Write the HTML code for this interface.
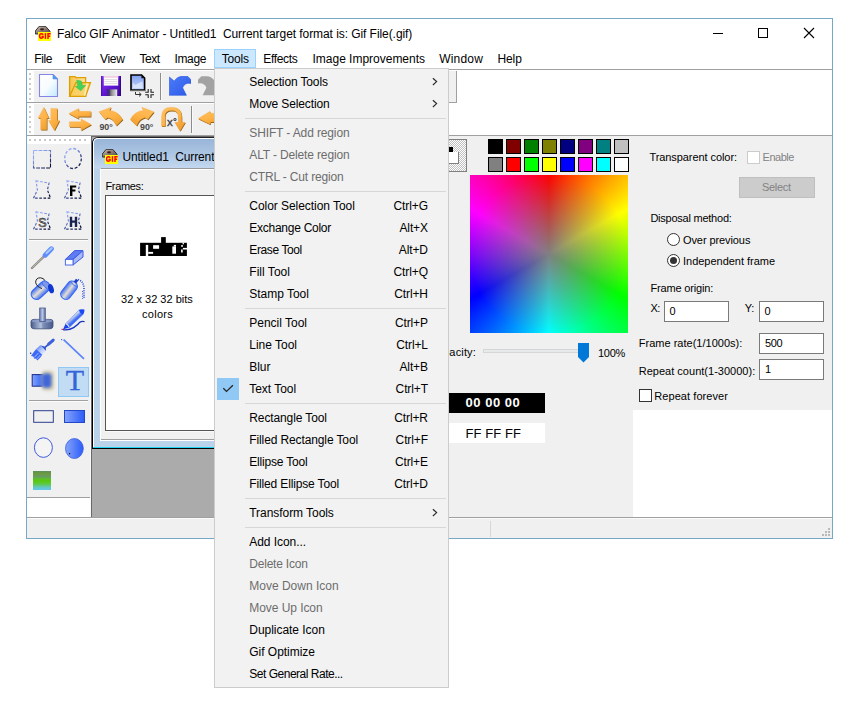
<!DOCTYPE html>
<html><head><meta charset="utf-8"><title>Falco GIF Animator</title>
<style>
*{box-sizing:border-box;margin:0;padding:0}
html,body{width:864px;height:713px;background:#fff;overflow:hidden}
body{position:relative;font-family:"Liberation Sans",sans-serif;font-size:12px;color:#000}
.abs,.t,.b{position:absolute}
.t{white-space:pre;display:block}
.msep{position:absolute;left:245px;width:201px;height:1px;background:#d7d7d7}
.inp{position:absolute;background:#fff;border:1px solid #7a7a7a;height:21px;width:65px}
.sw{position:absolute;width:15px;height:15px;border:1px solid #000}
</style></head><body>
<!-- main window frame -->
<div class="b" style="left:26px;top:18px;width:807px;height:521px;border:1px solid #78a8c8;background:#fff"></div>
<!-- title bar controls -->
<svg class="abs" style="left:706px;top:22px" width="120" height="24" viewBox="0 0 120 24">
 <path d="M7 11.5 H17" stroke="#000" stroke-width="1"/>
 <rect x="52.5" y="6.5" width="9" height="9" fill="none" stroke="#000" stroke-width="1"/>
 <path d="M98 6 L108 16 M108 6 L98 16" stroke="#000" stroke-width="1.1"/>
</svg>
<!-- menubar highlight -->
<div class="b" style="left:214px;top:49px;width:42px;height:19px;background:#cce8ff;border:1px solid #99d1ff"></div>
<!-- toolbar area -->
<div class="b" style="left:27px;top:69px;width:805px;height:1px;background:#a0a0a0"></div>
<div class="b" style="left:27px;top:70px;width:805px;height:66px;background:#fff"></div>
<div class="b" style="left:27px;top:71px;width:429px;height:31px;background:#f0f0f0"></div>
<div class="b" style="left:27px;top:71px;width:7px;height:31px;background:#fff"></div>
<div class="b" style="left:27px;top:102px;width:430px;height:1px;background:#a0a0a0"></div>
<div class="b" style="left:456px;top:71px;width:1px;height:32px;background:#a0a0a0"></div>
<div class="b" style="left:27px;top:104px;width:421px;height:31px;background:#f0f0f0"></div>
<div class="b" style="left:27px;top:104px;width:7px;height:31px;background:#fff"></div>
<div class="b" style="left:27px;top:135px;width:805px;height:1px;background:#a0a0a0"></div>
<!-- client background -->
<div class="b" style="left:27px;top:136px;width:805px;height:382px;background:#f0f0f0"></div>
<!-- status bar -->
<div class="b" style="left:27px;top:517px;width:805px;height:1px;background:#a0a0a0"></div>
<div class="b" style="left:27px;top:518px;width:805px;height:20px;background:#f0f0f0"></div>
<div class="b" style="left:27px;top:518px;width:805px;height:1px;background:#fbfbfb"></div>
<div class="b" style="left:490px;top:521px;width:1px;height:16px;background:#d7d7d7"></div>
<!-- right white area -->
<div class="b" style="left:633px;top:410px;width:199px;height:107px;background:#fff"></div>
<!-- tool palette -->
<div class="b" style="left:27px;top:497px;width:64px;height:20px;background:#fff;border-top:1px solid #a0a0a0"></div>
<div class="b" style="left:90px;top:136px;width:1px;height:381px;background:#fff"></div>
<div class="b" style="left:29px;top:239px;width:59px;height:1px;background:#a0a0a0"></div><div class="b" style="left:29px;top:240px;width:59px;height:1px;background:#fcfcfc"></div>
<div class="b" style="left:29px;top:400px;width:59px;height:1px;background:#a0a0a0"></div><div class="b" style="left:29px;top:401px;width:59px;height:1px;background:#fcfcfc"></div>
<!-- MDI area -->
<div class="b" style="left:27px;top:136px;width:63px;height:8px;background:#fff"></div>
<div class="b" style="left:90px;top:136px;width:1px;height:381px;background:#f8f8f8"></div>
<div class="b" style="left:91px;top:136px;width:356px;height:381px;background:#ababab;border-left:1px solid #696969;border-top:1px solid #696969"></div>
<!-- child window -->
<div class="b" style="left:92px;top:137px;width:355px;height:312px;background:linear-gradient(#97b3d7 0,#a9c3e2 14px,#c3d8ef 30px,#bbd2eb 31px);border-left:1px solid #000;border-top:1px solid #222;border-bottom:1px solid #000;border-top-left-radius:6px"></div>
<div class="b" style="left:93px;top:138px;width:354px;height:309px;border-left:1px solid #fff;border-top:1px solid #fff;border-top-left-radius:5px"></div>
<div class="b" style="left:93px;top:447px;width:354px;height:1px;background:#22d3f2"></div>
<div class="b" style="left:100px;top:168px;width:347px;height:273px;background:#f0f0f0;border-top:1px solid #9a9a9a;border-bottom:1px solid #fff;border-left:1px solid #fff"></div>
<div class="b" style="left:101px;top:169px;width:346px;height:1px;background:#fff"></div>
<div class="b" style="left:101px;top:439px;width:346px;height:1px;background:#a0a0a0"></div>
<div class="b" style="left:105px;top:195px;width:340px;height:236px;background:#fff;border:1px solid #555"></div>
<div class="b" style="left:105px;top:431px;width:340px;height:1px;background:#fafafa"></div>
<!-- pixel "text" sample in frame -->
<svg class="abs" style="left:140px;top:237px" width="48" height="20" viewBox="0 0 48 20">
 <g fill="#000"><rect x="21.1" y="0.1" width="4.7" height="6"/><rect x="0.1" y="5.8" width="46.8" height="13.2"/></g>
 <g fill="#fff"><rect x="5.8" y="7.9" width="2.4" height="11.2"/><rect x="13.1" y="8.2" width="6" height="3.6"/><rect x="8.2" y="14.9" width="4.9" height="1.9"/>
 <rect x="32.3" y="9.4" width="3.7" height="7.3"/><rect x="33.8" y="7.9" width="2.2" height="1.6"/>
 <rect x="42.6" y="5.7" width="1.3" height="1.6"/><rect x="41.1" y="8.2" width="1.9" height="1.5"/><rect x="42.9" y="10.9" width="4.1" height="1.6"/><rect x="41.1" y="12.5" width="1.6" height="3"/></g>
</svg>
<!-- fg/bg color indicator -->
<svg class="abs" style="left:440px;top:139px" width="27" height="33" viewBox="0 0 27 33" shape-rendering="crispEdges">
 <defs><pattern id="chk" width="2" height="2" patternUnits="userSpaceOnUse"><rect width="2" height="2" fill="#fff"/><rect width="1" height="1" fill="#c0c0c0"/><rect x="1" y="1" width="1" height="1" fill="#c0c0c0"/></pattern></defs>
 <rect width="27" height="33" fill="url(#chk)"/>
 <path d="M0 0.5 H26.5 V32.5 H0" fill="none" stroke="#808080" stroke-width="1"/>
 <rect x="6" y="8" width="7" height="5" fill="#000"/>
 <rect x="6" y="13" width="13" height="12" fill="#fff"/>
 <path d="M18.5 13 V24.5 H6" fill="none" stroke="#808080" stroke-width="1"/>
</svg>
<!-- swatches -->
<div class="sw" style="left:488px;top:139px;background:#000"></div><div class="sw" style="left:506px;top:139px;background:#800000"></div><div class="sw" style="left:524px;top:139px;background:#008000"></div><div class="sw" style="left:542px;top:139px;background:#808000"></div><div class="sw" style="left:560px;top:139px;background:#000080"></div><div class="sw" style="left:578px;top:139px;background:#800080"></div><div class="sw" style="left:596px;top:139px;background:#008080"></div><div class="sw" style="left:614px;top:139px;background:#c0c0c0"></div>
<div class="sw" style="left:488px;top:157px;background:#808080"></div><div class="sw" style="left:506px;top:157px;background:#f00"></div><div class="sw" style="left:524px;top:157px;background:#0f0"></div><div class="sw" style="left:542px;top:157px;background:#ff0"></div><div class="sw" style="left:560px;top:157px;background:#00f"></div><div class="sw" style="left:578px;top:157px;background:#f0f"></div><div class="sw" style="left:596px;top:157px;background:#0ff"></div><div class="sw" style="left:614px;top:157px;background:#fff"></div>
<!-- hue square -->
<div class="b" style="left:470px;top:175px;width:158px;height:158px;background:radial-gradient(circle at 50% 50%,rgba(128,128,128,1) 0,rgba(128,128,128,0) 80px),conic-gradient(from 0deg at 50% 50%,#f00,#ff0,#0f0,#0ff,#00f,#f0f,#f00)"></div>
<!-- opacity slider -->
<div class="b" style="left:483px;top:349px;width:100px;height:4px;background:#e7eaea;border:1px solid #d6d6d6"></div>
<svg class="abs" style="left:578px;top:343px" width="11" height="20" viewBox="0 0 11 20"><path d="M0 0 H11 V14 L5.5 19.5 L0 14 Z" fill="#0078d7"/></svg>
<!-- color value boxes -->
<div class="b" style="left:440px;top:393px;width:105px;height:20px;background:#000"></div>
<div class="b" style="left:440px;top:423px;width:105px;height:20px;background:#fff"></div>
<!-- right panel controls -->
<div class="b" style="left:747px;top:151px;width:13px;height:13px;background:#fff;border:1px solid #ccc"></div>
<div class="b" style="left:739px;top:177px;width:76px;height:21px;background:#ccc;border:1px solid #bfbfbf"></div>
<div class="b" style="left:667px;top:233px;width:13px;height:13px;background:#fff;border:1px solid #333;border-radius:50%"></div>
<div class="b" style="left:667px;top:254px;width:13px;height:13px;background:#fff;border:1px solid #333;border-radius:50%"></div>
<div class="b" style="left:670px;top:257px;width:7px;height:7px;background:#333;border-radius:50%"></div>
<div class="inp" style="left:664px;top:301px"></div>
<div class="inp" style="left:759px;top:301px"></div>
<div class="inp" style="left:759px;top:333px"></div>
<div class="inp" style="left:759px;top:359px"></div>
<div class="b" style="left:639px;top:389px;width:13px;height:13px;background:#fff;border:1px solid #333"></div>
<!-- size grip -->
<svg class="abs" style="left:820px;top:526px" width="12" height="12" viewBox="0 0 12 12" shape-rendering="crispEdges"><g fill="#b9b9b9"><rect x="8" y="2" width="2" height="2"/><rect x="5" y="5" width="2" height="2"/><rect x="8" y="5" width="2" height="2"/><rect x="2" y="8" width="2" height="2"/><rect x="5" y="8" width="2" height="2"/><rect x="8" y="8" width="2" height="2"/></g></svg>

<svg width="0" height="0" style="position:absolute">
 <defs>
  <linearGradient id="gOr" x1="0" y1="0" x2="0.5" y2="1"><stop offset="0" stop-color="#ffc062"/><stop offset="0.6" stop-color="#ffb347"/><stop offset="1" stop-color="#f3a233"/></linearGradient>
  <linearGradient id="gUndo" x1="0" y1="0" x2="1" y2="1"><stop offset="0" stop-color="#4c7cfa"/><stop offset="1" stop-color="#2c58e6"/></linearGradient><linearGradient id="gBl" x1="0" y1="0" x2="1" y2="1"><stop offset="0" stop-color="#7aa0ff"/><stop offset="1" stop-color="#2a5cf0"/></linearGradient>
  <linearGradient id="gBl2" x1="0" y1="0" x2="1" y2="0"><stop offset="0" stop-color="#3366ee"/><stop offset="1" stop-color="#88aaff"/></linearGradient>
  <linearGradient id="gDash" x1="0" y1="0" x2="0.75" y2="1"><stop offset="0" stop-color="#9db4ff"/><stop offset="0.4" stop-color="#7f93e6"/><stop offset="0.7" stop-color="#3a4688"/><stop offset="1" stop-color="#0a1038"/></linearGradient>
  <linearGradient id="gFalc" x1="0" y1="0" x2="1" y2="1"><stop offset="0" stop-color="#d8d0b8"/><stop offset="0.5" stop-color="#8a7a70"/><stop offset="1" stop-color="#50484c"/></linearGradient>
  <linearGradient id="gDoc" x1="0" y1="0" x2="1" y2="1"><stop offset="0" stop-color="#fff"/><stop offset="0.5" stop-color="#f8fcff"/><stop offset="1" stop-color="#bfeaff"/></linearGradient>
  <linearGradient id="gFold" x1="0" y1="0" x2="1" y2="0"><stop offset="0" stop-color="#f6c348"/><stop offset="1" stop-color="#ffe6a0"/></linearGradient><linearGradient id="gFold2" x1="0" y1="0" x2="1" y2="0.3"><stop offset="0" stop-color="#f9cc58"/><stop offset="1" stop-color="#fbd572"/></linearGradient>
  <linearGradient id="gFlop" x1="0" y1="0" x2="1" y2="1"><stop offset="0" stop-color="#8a3cf0"/><stop offset="0.5" stop-color="#6418d8"/><stop offset="1" stop-color="#3a0a98"/></linearGradient>
  <linearGradient id="gShut" x1="0" y1="0" x2="1" y2="0"><stop offset="0" stop-color="#222"/><stop offset="0.5" stop-color="#999"/><stop offset="1" stop-color="#eee"/></linearGradient>
  <linearGradient id="gFrm" x1="0" y1="0" x2="0" y2="1"><stop offset="0" stop-color="#7f9ef0"/><stop offset="1" stop-color="#c8d8fa"/></linearGradient>
  <g id="appicon">
   <path d="M4.2 0.3 H10.6 L15 5.2 V8 H0.3 V5 Z" fill="url(#gFalc)" stroke="#222" stroke-width="0.9"/>
   <ellipse cx="7" cy="3.3" rx="2" ry="1.1" fill="#3a1c22"/>
   <rect x="3" y="6" width="13" height="9" fill="#ff0"/>
   <g fill="none" stroke="#f00" stroke-width="1.45"><path d="M8.3 8.7 Q7.5 7.8 6.3 7.8 Q4.6 7.8 4.6 10 Q4.6 12.2 6.3 12.2 Q7.7 12.2 8.1 11.5 V10.4 H6.5"/><path d="M10.45 7.1 V12.9"/><path d="M13 12.9 V7.8 H15.7 M13 10.2 H15.2"/></g>
  </g>
  <g id="lasso" fill="none" stroke="url(#gDash)" stroke-width="1.2" stroke-dasharray="2.6 1.6">
   <path d="M3 0.8 L16 3.1 L14.4 10 L17.6 18.2 H0.5 L4.4 10 Z"/>
  </g>
  <path id="undoarrow" d="M0.3 1 L5.2 5 Q8.4 0.3 13.4 0.3 H18.6 L22 3.8 V7.4 Q15.6 6.2 13.6 11.8 L17.4 19.3 H0.3 Z"/>
 </defs>
</svg>
<!-- app icons -->
<svg class="abs" style="left:35px;top:26px" width="16" height="16" viewBox="0 0 16 16"><use href="#appicon"/></svg>
<svg class="abs" style="left:102px;top:149px" width="16" height="16" viewBox="0 0 16 16"><use href="#appicon"/></svg>

<!-- toolbar grips -->
<svg class="abs" style="left:29px;top:72px" width="3" height="28" viewBox="0 0 3 28" shape-rendering="crispEdges"><g fill="#cacaca"><rect x="0" y="1" width="2" height="2"/><rect x="0" y="6" width="2" height="2"/><rect x="0" y="11" width="2" height="2"/><rect x="0" y="16" width="2" height="2"/><rect x="0" y="21" width="2" height="2"/><rect x="0" y="26" width="2" height="2"/></g></svg>
<svg class="abs" style="left:29px;top:105px" width="3" height="28" viewBox="0 0 3 28" shape-rendering="crispEdges"><g fill="#cacaca"><rect x="0" y="1" width="2" height="2"/><rect x="0" y="6" width="2" height="2"/><rect x="0" y="11" width="2" height="2"/><rect x="0" y="16" width="2" height="2"/><rect x="0" y="21" width="2" height="2"/><rect x="0" y="26" width="2" height="2"/></g></svg>
<svg class="abs" style="left:29px;top:139px" width="60" height="3" viewBox="0 0 60 3" shape-rendering="crispEdges"><g fill="#cacaca"><rect x="0" y="0" width="2" height="2"/><rect x="5" y="0" width="2" height="2"/><rect x="10" y="0" width="2" height="2"/><rect x="15" y="0" width="2" height="2"/><rect x="20" y="0" width="2" height="2"/><rect x="25" y="0" width="2" height="2"/><rect x="30" y="0" width="2" height="2"/><rect x="35" y="0" width="2" height="2"/><rect x="40" y="0" width="2" height="2"/><rect x="45" y="0" width="2" height="2"/><rect x="50" y="0" width="2" height="2"/><rect x="55" y="0" width="2" height="2"/></g></svg>

<!-- toolbar 1 -->
<svg class="abs" style="left:38px;top:73px" width="22" height="25" viewBox="0 0 22 25">
 <path d="M1.5 1.5 H15 L19.5 6 V23.5 H1.5 Z" fill="url(#gDoc)" stroke="#8486e6" stroke-width="1.1"/>
 <path d="M15 1.5 L19.5 6 H15 Z" fill="#4aa2ee" stroke="#5a8ae0" stroke-width="0.6"/>
</svg>
<svg class="abs" style="left:68px;top:75px" width="24" height="23" viewBox="0 0 24 23">
 <path d="M1.6 21.4 V1.6 H7 L7.8 2.7 H17.6 V21.4 Z" fill="url(#gFold)" stroke="#dc9e00" stroke-width="1.3"/>
 <path d="M1.6 21.4 L7.8 7.6 H22.4 L17.6 21.4 Z" fill="url(#gFold2)" stroke="#dc9e00" stroke-width="1.3"/>
 <path d="M19.2 8.4 L16.6 20.6" stroke="#fff0c0" stroke-width="1.3"/>
 <path d="M8.6 5.2 L13.2 6 L14.6 10.6 L17.6 10.4 L12.8 15.8 L7.2 11.4 L10 11.2 Z" fill="#48d058" stroke="#3cc24c" stroke-width="0.6" stroke-linejoin="round"/>
</svg>
<svg class="abs" style="left:101px;top:76px" width="20" height="20" viewBox="0 0 20 20">
 <rect x="0" y="0" width="20" height="20" fill="url(#gFlop)"/>
 <rect x="0" y="0" width="1.2" height="20" fill="#3a0a98" opacity=".6"/><rect x="18.8" y="0" width="1.2" height="20" fill="#24046c" opacity=".7"/>
 <rect x="2.8" y="0" width="14.4" height="9.6" fill="#fff"/>
 <rect x="2.8" y="0" width="14.4" height="1.8" fill="#f1cfe4"/>
 <path d="M3.4 3.6 H16.6 M3.4 5.6 H16.6 M3.4 7.6 H16.6" stroke="#d8cfd4" stroke-width="0.8"/>
 <rect x="6.2" y="13.4" width="10" height="6.6" fill="url(#gShut)"/>
 <rect x="6.2" y="13.4" width="2.6" height="6.6" fill="#4a2a8a"/>
</svg>
<svg class="abs" style="left:129px;top:73px" width="26" height="26" viewBox="0 0 26 26">
 <path d="M2 2 H12.6 L15.6 5 V17 H2 Z" fill="url(#gFrm)" stroke="#000" stroke-width="1.6"/>
 <path d="M12.4 1.6 L16 5.2 H12.4 Z" fill="#111"/>
 <path d="M4 10 L6.5 12 L9 10.5 L13.5 8.5 V15 H4 Z" fill="#dfe8fc" opacity=".8"/>
 <rect x="1.2" y="17" width="15.2" height="1.2" fill="#666"/>
 <path d="M6.5 19 V21.5 H12 M10 19.6 L12.2 21.5 L10 23.4" fill="none" stroke="#333" stroke-width="1"/>
 <path d="M19.2 16 V19.2 H16.2 M22 16 V19.2 H25 M19.2 25 V21.8 H16.2 M22 25 V21.8 H25" fill="none" stroke="#222" stroke-width="1.1"/>
</svg>
<div class="b" style="left:160px;top:73px;width:1px;height:27px;background:#8c8c8c"></div><div class="b" style="left:161px;top:73px;width:1px;height:27px;background:#fafafa"></div>
<svg class="abs" style="left:169px;top:76px" width="22" height="20" viewBox="0 0 22 20"><use href="#undoarrow" fill="url(#gUndo)" stroke="#2a54dc" stroke-width="0.6"/></svg>
<svg class="abs" style="left:198px;top:76px" width="22" height="20" viewBox="0 0 22 20"><g transform="translate(22,0) scale(-1,1)"><use href="#undoarrow" fill="#a2a2a2"/></g></svg>

<!-- toolbar 2 -->
<svg class="abs" style="left:37px;top:106px" width="24" height="26" viewBox="0 0 24 26">
 <defs><path id="ud1" d="M6.9 1.2 L12 12.2 H9.8 V23.8 H3.6 V12.2 H1 Z"/><path id="ud2" d="M17.3 24.4 L22.5 14.5 H20.2 V2.4 H13.8 V14.5 H11.5 Z"/></defs>
 <g fill="#8c5e14" transform="translate(0.7,0.8)"><use href="#ud1"/><use href="#ud2"/></g>
 <g fill="url(#gOr)" stroke="#f0a63c" stroke-width="0.3"><use href="#ud1"/><use href="#ud2"/></g>
</svg>
<svg class="abs" style="left:68px;top:107px" width="25" height="25" viewBox="0 0 25 25">
 <defs><path id="lr1" d="M0.8 6.6 L10.6 1.4 V4.3 H22.8 V9.5 H10.6 V11.8 Z"/><path id="lr2" d="M23.3 17.6 L13 23.4 V19.9 H1.4 V14.7 H13 V11.8 Z"/></defs>
 <g fill="#8c5e14" transform="translate(0.6,0.9)"><use href="#lr1"/><use href="#lr2"/></g>
 <g fill="url(#gOr)" stroke="#f0a63c" stroke-width="0.3"><use href="#lr1"/><use href="#lr2"/></g>
</svg>
<svg class="abs" style="left:98px;top:106px" width="27" height="26" viewBox="0 0 27 26">
 <defs><path id="rotl" d="M0.9 5.8 L13 1.2 L11.6 4.4 Q19.8 4.8 24.6 13.4 L18.2 19.7 Q15.4 12.6 9.6 11.6 L7.2 13.4 Z"/></defs>
 <use href="#rotl" fill="#8c5e14" transform="translate(0.7,0.9)"/>
 <use href="#rotl" fill="url(#gOr)" stroke="#f0a63c" stroke-width="0.3"/>
 <text x="1.4" y="24.2" font-family="Liberation Sans" font-weight="700" font-size="8.9" fill="#484848">90°</text>
</svg>
<svg class="abs" style="left:129px;top:106px" width="27" height="26" viewBox="0 0 27 26">
 <g transform="translate(25.8,0) scale(-1,1)"><use href="#rotl" fill="#8c5e14" transform="translate(-0.7,0.9)"/><use href="#rotl" fill="url(#gOr)" stroke="#f0a63c" stroke-width="0.3"/></g>
 <text x="11" y="24.2" font-family="Liberation Sans" font-weight="700" font-size="8.9" fill="#484848">90°</text>
</svg>
<svg class="abs" style="left:160px;top:106px" width="27" height="27" viewBox="0 0 27 27">
 <defs><path id="uturn" d="M1.5 20.3 V10.5 Q1.5 1.2 11.5 1.2 Q21.7 1.2 21.7 10.5 V16.3 H25.2 L20 25 L14.8 16.3 H18.2 V10.5 Q18.2 4.6 11.5 4.6 Q5 4.6 5 10.5 V20.3 Z"/></defs>
 <use href="#uturn" fill="#8c5e14" transform="translate(0.6,0.8)"/>
 <use href="#uturn" fill="url(#gOr)" stroke="#f0a63c" stroke-width="0.3"/>
 <text x="6.9" y="19.8" font-family="Liberation Sans" font-weight="400" font-size="11.5" fill="#404040" stroke="#404040" stroke-width="0.35">x<tspan dx="0.3" dy="-1.2" font-size="9.5">°</tspan></text>
</svg>
<div class="b" style="left:191px;top:106px;width:1px;height:27px;background:#8c8c8c"></div><div class="b" style="left:192px;top:106px;width:1px;height:27px;background:#fafafa"></div>
<svg class="abs" style="left:198px;top:108px" width="24" height="20" viewBox="0 0 24 20">
 <path d="M0.2 10.5 L12 3.3 L12.4 5.2 H24 V14 H12.5 L12.3 16.4 Z" fill="#8c5e14" transform="translate(0.5,0.9)"/>
 <path d="M0.2 10.5 L12 3.3 L12.4 5.2 H24 V14 H12.5 L12.3 16.4 Z" fill="url(#gOr)" stroke="#f0a63c" stroke-width="0.3"/>
</svg>

<!-- palette: selection tools -->
<svg class="abs" style="left:32px;top:149px" width="20" height="20" viewBox="0 0 20 20"><rect x="1.5" y="1.5" width="17" height="17.5" fill="none" stroke="url(#gDash)" stroke-width="1.1" stroke-dasharray="3.9 1.1"/></svg>
<svg class="abs" style="left:63px;top:147px" width="20" height="23" viewBox="0 0 20 23"><ellipse cx="10" cy="11.5" rx="8.3" ry="10" fill="none" stroke="url(#gDash)" stroke-width="1.3" stroke-dasharray="3 1.8"/></svg>
<svg class="abs" style="left:33px;top:180px" width="19" height="20" viewBox="0 0 19 20"><use href="#lasso"/></svg>
<svg class="abs" style="left:64px;top:180px" width="19" height="20" viewBox="0 0 19 20"><use href="#lasso"/><path d="M6 5.6 H12.2 V7.6 H8.4 V9.6 H11.4 V11.5 H8.4 V16 H6 Z" fill="#000"/></svg>
<svg class="abs" style="left:33px;top:211px" width="19" height="20" viewBox="0 0 19 20"><use href="#lasso"/><text x="9.4" y="15.6" font-family="Liberation Sans" font-size="12.5" fill="#fff" stroke="#111" stroke-width="0.65" text-anchor="middle">S</text></svg>
<svg class="abs" style="left:64px;top:211px" width="19" height="20" viewBox="0 0 19 20"><use href="#lasso"/><path d="M5.8 5.8 H8.2 V9.6 H10.8 V5.8 H13.2 V16 H10.8 V11.8 H8.2 V16 H5.8 Z" fill="#1a2450"/></svg>

<svg width="0" height="0" style="position:absolute">
 <defs>
  <linearGradient id="gCap" x1="0" y1="0" x2="0" y2="1"><stop offset="0" stop-color="#3f6cf5"/><stop offset="0.5" stop-color="#e4e0d4"/><stop offset="1" stop-color="#3f6cf5"/></linearGradient>
  <linearGradient id="gCap2" x1="0" y1="0" x2="0" y2="1"><stop offset="0" stop-color="#4a78ff"/><stop offset="0.45" stop-color="#cfdcff"/><stop offset="1" stop-color="#3f6cf5"/></linearGradient>
  <linearGradient id="gStamp" x1="0" y1="0" x2="1" y2="0"><stop offset="0" stop-color="#4a5c8c"/><stop offset="0.45" stop-color="#b4c2de"/><stop offset="0.55" stop-color="#7f90b8"/><stop offset="1" stop-color="#46588a"/></linearGradient>
  <linearGradient id="gStampH" x1="0" y1="0" x2="1" y2="0"><stop offset="0" stop-color="#6a7cae"/><stop offset="0.5" stop-color="#b8c6e6"/><stop offset="1" stop-color="#5a6c9e"/></linearGradient>
  <linearGradient id="gLR" x1="0" y1="0" x2="1" y2="0"><stop offset="0" stop-color="#86a4fb"/><stop offset="1" stop-color="#2a5cf8"/></linearGradient>
  <radialGradient id="gBlur" cx="0.4" cy="0.5" r="0.6"><stop offset="0" stop-color="#3b62d8"/><stop offset="0.45" stop-color="#4468d0" stop-opacity="0.9"/><stop offset="0.8" stop-color="#c8c4a8" stop-opacity="0.6"/><stop offset="1" stop-color="#e8e4d0" stop-opacity="0"/></radialGradient>
  <linearGradient id="gGrad" x1="0" y1="0" x2="0" y2="1"><stop offset="0" stop-color="#5a9062"/><stop offset="0.12" stop-color="#6a9a3a"/><stop offset="0.3" stop-color="#6a9a66"/><stop offset="0.42" stop-color="#5cc022"/><stop offset="0.55" stop-color="#58c812"/><stop offset="0.7" stop-color="#5cc850"/><stop offset="0.82" stop-color="#62c8a8"/><stop offset="0.9" stop-color="#62c8d0"/><stop offset="1" stop-color="#62c8f4"/></linearGradient>
 </defs>
</svg>
<!-- dropper -->
<svg class="abs" style="left:30px;top:246px" width="25" height="24" viewBox="0 0 25 24">
 <path d="M2 22 L14.8 9.6" stroke="#8e8a84" stroke-width="2.4" stroke-linecap="round"/>
 <path d="M2.4 21.6 L14.6 9.8" stroke="#c8c4bc" stroke-width="0.8"/>
 <path d="M15.2 9.2 L21.4 2.8" stroke="#5f8efc" stroke-width="5" stroke-linecap="round"/>
 <path d="M16.6 7 L21.6 2.2" stroke="#a8c8ff" stroke-width="2.2" stroke-linecap="round"/>
</svg>
<!-- eraser -->
<svg class="abs" style="left:64px;top:249px" width="21" height="18" viewBox="0 0 21 18">
 <path d="M1.4 10.4 L10.6 1.6 H19 L9 10.4 Z" fill="#5f7df0" stroke="#3a5ae8" stroke-width="1"/>
 <path d="M9 10.4 L19 1.6 V8 L9 16 Z" fill="#a9b9f6" stroke="#3a5ae8" stroke-width="1"/>
 <rect x="1.4" y="10.4" width="7.6" height="5.6" fill="#fff" stroke="#4a6aea" stroke-width="1"/>
</svg>
<!-- bucket -->
<svg class="abs" style="left:29px;top:276px" width="27" height="26" viewBox="0 0 27 26">
 <g transform="rotate(-43 12 14)"><rect x="0.6" y="8.6" width="21.6" height="10.8" rx="5.2" fill="url(#gCap)" stroke="#3566f2" stroke-width="1"/>
 <ellipse cx="19.4" cy="14" rx="2.6" ry="5.2" fill="#7f98e8" stroke="#3566f2" stroke-width="0.8"/></g>
 <ellipse cx="22" cy="12.6" rx="2.6" ry="4.8" transform="rotate(-18 22 12.6)" fill="#1038d0"/>
 <path d="M6.6 6.2 Q7 1.6 11.6 1.8 Q15.4 2.4 15.6 4.4 M6.6 6.2 Q7.4 10.6 13 12.6" fill="none" stroke="#222" stroke-width="1"/>
</svg>
<!-- spray -->
<svg class="abs" style="left:60px;top:277px" width="27" height="24" viewBox="0 0 27 24">
 <g transform="rotate(-52 9.5 12.5)"><rect x="-1.4" y="7.4" width="20" height="10.4" rx="4.6" fill="url(#gCap)" stroke="#3566f2" stroke-width="1"/>
 <path d="M16.4 8.4 Q14.6 12.6 16.4 16.8" fill="none" stroke="#3566f2" stroke-width="0.8"/>
 <rect x="18.4" y="11" width="3.6" height="3" fill="#1c3cc8"/></g>
 <path d="M18 2.6 Q23.4 4 24 11 V22" fill="none" stroke="#2a4ee0" stroke-width="1.6" stroke-dasharray="1 1.2"/>
 <path d="M22.6 14 V22" fill="none" stroke="#2a4ee0" stroke-width="1" stroke-dasharray="1 1.4"/>
</svg>
<!-- stamp -->
<svg class="abs" style="left:30px;top:307px" width="24" height="23" viewBox="0 0 24 23">
 <path d="M1 14.4 Q1 12.4 4 12.4 H20 Q23 12.4 23 14.4 V19 Q23 21.8 20 21.8 H4 Q1 21.8 1 19 Z" fill="url(#gStamp)" stroke="#3c4c7c" stroke-width="0.8"/>
 <ellipse cx="12" cy="14" rx="10.6" ry="1.8" fill="#8e9fc8" opacity=".8"/>
 <rect x="9.7" y="1" width="5.6" height="13.4" fill="url(#gStampH)" stroke="#4a5a8c" stroke-width="0.8"/>
</svg>
<!-- pencil -->
<svg class="abs" style="left:60px;top:306px" width="27" height="26" viewBox="0 0 27 26">
 <defs><linearGradient id="gPen" gradientUnits="userSpaceOnUse" x1="9.5" y1="9.5" x2="14" y2="14.5"><stop offset="0" stop-color="#4a78ff"/><stop offset="0.45" stop-color="#dfe3ee"/><stop offset="1" stop-color="#3f6cf5"/></linearGradient></defs>
 <path d="M3 23.6 Q9 24.4 13.6 21.6 T19.6 16.4 Q22.4 14.6 24.6 15.8" fill="none" stroke="#1430c4" stroke-width="1.3"/>
 <path d="M5.6 17.8 L19.2 4 L24 4.6 L23 8.4 L9.2 21.6 Z" fill="url(#gPen)" stroke="#5a84f8" stroke-width="0.7"/>
 <path d="M19 4 Q21.4 2.6 24.4 3.6 Q24.6 6.4 23 8.4 Q19.8 7.6 19 4 Z" fill="#1c48f4"/>
 <path d="M5.6 17.8 L9.2 21.6 L3 23.4 Z" fill="#1c40e8"/>
 <path d="M5.8 17.6 Q8.2 18.4 9.2 21.2" fill="none" stroke="#f4f4ea" stroke-width="1"/>
 <rect x="1.6" y="22.8" width="1.2" height="1.2" fill="#f00"/>
</svg>
<!-- brush -->
<svg class="abs" style="left:29px;top:337px" width="27" height="25" viewBox="0 0 27 25">
 <defs><linearGradient id="gFer" x1="0" y1="0" x2="1" y2="1"><stop offset="0" stop-color="#4a74f4"/><stop offset="0.6" stop-color="#c4d4ff"/><stop offset="1" stop-color="#eef3ff"/></linearGradient></defs>
 <path d="M24.2 3.2 L16 10.4" stroke="#3558d0" stroke-width="1.8" stroke-linecap="round"/>
 <path d="M24.2 3.1 L19.6 7.2" stroke="#3a60da" stroke-width="3" stroke-linecap="round"/>
 <path d="M11.2 8.2 L15.4 9.6 L17 11.6 L16.9 14 Z" fill="#2f55cc"/>
 <path d="M7.2 12 L11.2 8.2 L16.9 14 L13.2 17.8 Z" fill="url(#gFer)"/>
 <path d="M7.2 12 L13.2 17.8 L11.4 20.4 L8.4 23.6 L6.8 21.4 L5.2 21.8 L4.4 19.6 L2 19 L4.4 15.6 Z" fill="#3b68f6"/>
 <path d="M9.4 16 L5.4 20.4 M11.4 18 L7.8 22" stroke="#b8ccff" stroke-width="0.8"/>
 <rect x="1" y="15.6" width="1.3" height="1.3" fill="#1a2ab0"/>
</svg>
<!-- line -->
<svg class="abs" style="left:60px;top:338px" width="26" height="23" viewBox="0 0 26 23">
 <path d="M3.6 1.6 L24 20.8" stroke="#5a84f8" stroke-width="1.7"/>
 <rect x="1" y="1" width="1.2" height="1.2" fill="#4468e0"/>
</svg>
<!-- blur -->
<svg class="abs" style="left:31px;top:367px" width="26" height="27" viewBox="0 0 26 27">
 <defs><filter id="fB" x="-50%" y="-50%" width="200%" height="200%"><feGaussianBlur stdDeviation="1.5"/></filter><filter id="fB3" x="-50%" y="-50%" width="200%" height="200%"><feGaussianBlur stdDeviation="1.5"/></filter></defs>
 <rect x="1.2" y="7.6" width="11" height="11.6" fill="url(#gLR)" stroke="#1a2a86" stroke-width="1"/>
 <rect x="10.6" y="3.8" width="12.4" height="19.8" rx="4" fill="#cdc7a6" opacity=".85" filter="url(#fB)"/>
 <rect x="11.2" y="6.4" width="9.2" height="14.4" rx="3" fill="#4166d8" filter="url(#fB3)"/>
</svg>
<!-- Text tool (selected) -->
<div class="b" style="left:58px;top:367px;width:31px;height:30px;background:#c2dcf3;border:1px solid #90c8f6"></div>
<span class="t" style="left:65.7px;top:365.4px;font-family:'Liberation Serif';font-size:30px;line-height:30px;color:#3465d8;-webkit-text-stroke:0.35px #3465d8;">T</span>
<!-- rect tools -->
<svg class="abs" style="left:32px;top:409px" width="23" height="15" viewBox="0 0 23 15"><rect x="1" y="1" width="21" height="13" fill="#fff" opacity=".7"/><rect x="1.7" y="1.7" width="19.6" height="11.6" fill="#f0f0f0" stroke="#2a3a8c" stroke-width="1"/></svg>
<svg class="abs" style="left:63px;top:409px" width="23" height="15" viewBox="0 0 23 15"><rect x="1.5" y="1.5" width="20" height="12" fill="url(#gLR)" stroke="#2446c8" stroke-width="1"/></svg>
<!-- circle tools -->
<svg class="abs" style="left:33px;top:436px" width="21" height="23" viewBox="0 0 21 23"><ellipse cx="10.4" cy="11.6" rx="9" ry="9.8" fill="#f4f4f4" stroke="#2a4ad8" stroke-width="0.9"/></svg>
<svg class="abs" style="left:64px;top:437px" width="21" height="23" viewBox="0 0 21 23"><ellipse cx="10.4" cy="11.5" rx="8.9" ry="10" fill="url(#gLR)" stroke="#3a5ee0" stroke-width="0.8"/><rect x="5" y="16" width="1.2" height="1.2" fill="#102"/></svg>
<!-- gradient -->
<svg class="abs" style="left:33px;top:471px" width="18" height="19" viewBox="0 0 18 19"><rect width="18" height="19" fill="url(#gGrad)"/></svg>

<span class="t" style="left:57.00px;top:27.84px;font-size:12px;line-height:12px;color:#000;letter-spacing:-0.067px;">Falco GIF Animator - Untitled1  Current target format is: Gif File(.gif)</span><span class="t" style="left:34.25px;top:53.04px;font-size:12px;line-height:12px;color:#000;letter-spacing:-0.398px;">File</span><span class="t" style="left:66.50px;top:53.04px;font-size:12px;line-height:12px;color:#000;letter-spacing:-0.422px;">Edit</span><span class="t" style="left:100.00px;top:53.04px;font-size:12px;line-height:12px;color:#000;letter-spacing:-0.324px;">View</span><span class="t" style="left:139.50px;top:53.04px;font-size:12px;line-height:12px;color:#000;letter-spacing:-0.504px;">Text</span><span class="t" style="left:174.50px;top:53.04px;font-size:12px;line-height:12px;color:#000;letter-spacing:-0.372px;">Image</span><span class="t" style="left:221.75px;top:53.04px;font-size:12px;line-height:12px;color:#000;letter-spacing:-0.203px;">Tools</span><span class="t" style="left:263.25px;top:53.04px;font-size:12px;line-height:12px;color:#000;letter-spacing:-0.317px;">Effects</span><span class="t" style="left:312.50px;top:53.04px;font-size:12px;line-height:12px;color:#000;letter-spacing:-0.012px;">Image Improvements</span><span class="t" style="left:439.25px;top:53.04px;font-size:12px;line-height:12px;color:#000;letter-spacing:0.177px;">Window</span><span class="t" style="left:497.50px;top:53.04px;font-size:12px;line-height:12px;color:#000;letter-spacing:-0.109px;">Help</span><span class="t" style="left:649.40px;top:152.19px;font-size:11px;line-height:11px;color:#000;letter-spacing:-0.070px;">Transparent color:</span><span class="t" style="left:762.50px;top:152.19px;font-size:11px;line-height:11px;color:#838383;letter-spacing:-0.461px;">Enable</span><span class="t" style="left:762.00px;top:182.19px;font-size:11px;line-height:11px;color:#838383;letter-spacing:-0.313px;">Select</span><span class="t" style="left:650.40px;top:212.69px;font-size:11px;line-height:11px;color:#000;letter-spacing:-0.237px;">Disposal method:</span><span class="t" style="left:683.00px;top:234.69px;font-size:11px;line-height:11px;color:#000;letter-spacing:-0.091px;">Over previous</span><span class="t" style="left:683.00px;top:255.69px;font-size:11px;line-height:11px;color:#000;letter-spacing:-0.015px;">Independent frame</span><span class="t" style="left:650.40px;top:282.69px;font-size:11px;line-height:11px;color:#000;letter-spacing:-0.161px;">Frame origin:</span><span class="t" style="left:650.40px;top:303.19px;font-size:11px;line-height:11px;color:#000;letter-spacing:-0.453px;">X:</span><span class="t" style="left:744.70px;top:303.19px;font-size:11px;line-height:11px;color:#000;letter-spacing:-0.248px;">Y:</span><span class="t" style="left:669.60px;top:306.19px;font-size:11px;line-height:11px;color:#000;letter-spacing:-0.050px;">0</span><span class="t" style="left:764.50px;top:306.19px;font-size:11px;line-height:11px;color:#000;letter-spacing:-0.050px;">0</span><span class="t" style="left:638.75px;top:338.49px;font-size:11px;line-height:11px;color:#000;letter-spacing:0.011px;">Frame rate(1/1000s):</span><span class="t" style="left:765.00px;top:337.69px;font-size:11px;line-height:11px;color:#000;letter-spacing:-0.320px;">500</span><span class="t" style="left:638.75px;top:366.19px;font-size:11px;line-height:11px;color:#000;letter-spacing:0.012px;">Repeat count(1-30000):</span><span class="t" style="left:765.00px;top:363.79px;font-size:11px;line-height:11px;color:#000;letter-spacing:-0.050px;">1</span><span class="t" style="left:654.30px;top:390.69px;font-size:11px;line-height:11px;color:#000;letter-spacing:0.067px;">Repeat forever</span><span class="t" style="left:598.00px;top:347.79px;font-size:11px;line-height:11px;color:#000;letter-spacing:-0.285px;">100%</span><span class="t" style="left:434.40px;top:347.19px;font-size:11px;line-height:11px;color:#000;letter-spacing:0.155px;">Opacity:</span><span class="t" style="left:465.50px;top:396.30px;font-size:13px;line-height:13px;color:#fff;letter-spacing:0.524px;font-weight:700;">00 00 00</span><span class="t" style="left:465.50px;top:426.50px;font-size:13px;line-height:13px;color:#000;letter-spacing:0.078px;">FF FF FF</span><span class="t" style="left:122.50px;top:150.64px;font-size:12px;line-height:12px;color:#000;letter-spacing:-0.120px;">Untitled1  Current target</span><span class="t" style="left:105.40px;top:180.99px;font-size:11px;line-height:11px;color:#000;letter-spacing:-0.321px;">Frames:</span><span class="t" style="left:121.10px;top:294.19px;font-size:11px;line-height:11px;color:#000;letter-spacing:0.016px;">32 x 32 32 bits</span><span class="t" style="left:142.10px;top:308.69px;font-size:11px;line-height:11px;color:#000;letter-spacing:0.259px;">colors</span>
<!-- dropdown menu -->
<div class="b" style="left:214px;top:68px;width:235px;height:620px;background:#f2f2f2;border:1px solid #ccc"></div>
<div class="b" style="left:217px;top:378px;width:22px;height:22px;background:#90c8f6"></div>
<svg class="abs" style="left:222px;top:383px" width="12" height="12" viewBox="0 0 12 12"><path d="M1.3 5.2 L4.5 8.4 L10.9 2.2" fill="none" stroke="#262626" stroke-width="1.3"/></svg>
<svg class="abs" style="left:431px;top:77px" width="8" height="10" viewBox="0 0 8 10"><path d="M1.9 1.2 L5.6 4.6 L1.9 8" fill="none" stroke="#2c2c2c" stroke-width="1.2"/></svg><svg class="abs" style="left:431px;top:99px" width="8" height="10" viewBox="0 0 8 10"><path d="M1.9 1.2 L5.6 4.6 L1.9 8" fill="none" stroke="#2c2c2c" stroke-width="1.2"/></svg><div class="msep" style="top:118px"></div><div class="msep" style="top:191px"></div><div class="msep" style="top:308px"></div><div class="msep" style="top:403px"></div><div class="msep" style="top:498px"></div><svg class="abs" style="left:431px;top:508px" width="8" height="10" viewBox="0 0 8 10"><path d="M1.9 1.2 L5.6 4.6 L1.9 8" fill="none" stroke="#2c2c2c" stroke-width="1.2"/></svg><div class="msep" style="top:527px"></div>
<span class="t" style="left:249.30px;top:75.84px;font-size:12px;line-height:12px;color:#000;letter-spacing:-0.133px;">Selection Tools</span><span class="t" style="left:249.30px;top:97.84px;font-size:12px;line-height:12px;color:#000;letter-spacing:-0.125px;">Move Selection</span><span class="t" style="left:249.30px;top:126.84px;font-size:12px;line-height:12px;color:#6d6d6d;letter-spacing:-0.128px;">SHIFT - Add region</span><span class="t" style="left:249.30px;top:148.84px;font-size:12px;line-height:12px;color:#6d6d6d;letter-spacing:-0.145px;">ALT - Delete region</span><span class="t" style="left:249.30px;top:170.84px;font-size:12px;line-height:12px;color:#6d6d6d;letter-spacing:-0.154px;">CTRL - Cut region</span><span class="t" style="left:249.30px;top:199.84px;font-size:12px;line-height:12px;color:#000;letter-spacing:-0.051px;">Color Selection Tool</span><span class="t" style="left:393.58px;top:199.84px;font-size:12px;line-height:12px;color:#000;letter-spacing:-0.120px;">Ctrl+G</span><span class="t" style="left:249.30px;top:221.84px;font-size:12px;line-height:12px;color:#000;letter-spacing:-0.264px;">Exchange Color</span><span class="t" style="left:399.46px;top:221.84px;font-size:12px;line-height:12px;color:#000;letter-spacing:-0.120px;">Alt+X</span><span class="t" style="left:249.30px;top:243.84px;font-size:12px;line-height:12px;color:#000;letter-spacing:-0.388px;">Erase Tool</span><span class="t" style="left:398.79px;top:243.84px;font-size:12px;line-height:12px;color:#000;letter-spacing:-0.120px;">Alt+D</span><span class="t" style="left:249.30px;top:265.84px;font-size:12px;line-height:12px;color:#000;letter-spacing:0.026px;">Fill Tool</span><span class="t" style="left:393.58px;top:265.84px;font-size:12px;line-height:12px;color:#000;letter-spacing:-0.120px;">Ctrl+Q</span><span class="t" style="left:249.30px;top:287.84px;font-size:12px;line-height:12px;color:#000;letter-spacing:-0.021px;">Stamp Tool</span><span class="t" style="left:394.26px;top:287.84px;font-size:12px;line-height:12px;color:#000;letter-spacing:-0.120px;">Ctrl+H</span><span class="t" style="left:249.30px;top:316.84px;font-size:12px;line-height:12px;color:#000;letter-spacing:-0.012px;">Pencil Tool</span><span class="t" style="left:394.91px;top:316.84px;font-size:12px;line-height:12px;color:#000;letter-spacing:-0.120px;">Ctrl+P</span><span class="t" style="left:249.30px;top:338.84px;font-size:12px;line-height:12px;color:#000;letter-spacing:-0.014px;">Line Tool</span><span class="t" style="left:396.26px;top:338.84px;font-size:12px;line-height:12px;color:#000;letter-spacing:-0.120px;">Ctrl+L</span><span class="t" style="left:249.30px;top:360.84px;font-size:12px;line-height:12px;color:#000;letter-spacing:-0.086px;">Blur</span><span class="t" style="left:399.46px;top:360.84px;font-size:12px;line-height:12px;color:#000;letter-spacing:-0.120px;">Alt+B</span><span class="t" style="left:249.30px;top:382.84px;font-size:12px;line-height:12px;color:#000;letter-spacing:-0.049px;">Text Tool</span><span class="t" style="left:395.60px;top:382.84px;font-size:12px;line-height:12px;color:#000;letter-spacing:-0.120px;">Ctrl+T</span><span class="t" style="left:249.30px;top:411.84px;font-size:12px;line-height:12px;color:#000;letter-spacing:-0.119px;">Rectangle Tool</span><span class="t" style="left:394.26px;top:411.84px;font-size:12px;line-height:12px;color:#000;letter-spacing:-0.120px;">Ctrl+R</span><span class="t" style="left:249.30px;top:433.84px;font-size:12px;line-height:12px;color:#000;letter-spacing:-0.118px;">Filled Rectangle Tool</span><span class="t" style="left:395.60px;top:433.84px;font-size:12px;line-height:12px;color:#000;letter-spacing:-0.120px;">Ctrl+F</span><span class="t" style="left:249.30px;top:455.84px;font-size:12px;line-height:12px;color:#000;letter-spacing:-0.190px;">Ellipse Tool</span><span class="t" style="left:394.91px;top:455.84px;font-size:12px;line-height:12px;color:#000;letter-spacing:-0.120px;">Ctrl+E</span><span class="t" style="left:249.30px;top:477.84px;font-size:12px;line-height:12px;color:#000;letter-spacing:-0.147px;">Filled Ellipse Tool</span><span class="t" style="left:394.26px;top:477.84px;font-size:12px;line-height:12px;color:#000;letter-spacing:-0.120px;">Ctrl+D</span><span class="t" style="left:249.30px;top:506.84px;font-size:12px;line-height:12px;color:#000;letter-spacing:-0.057px;">Transform Tools</span><span class="t" style="left:249.30px;top:535.84px;font-size:12px;line-height:12px;color:#000;letter-spacing:-0.061px;">Add Icon...</span><span class="t" style="left:249.30px;top:557.84px;font-size:12px;line-height:12px;color:#6d6d6d;letter-spacing:-0.218px;">Delete Icon</span><span class="t" style="left:249.30px;top:579.84px;font-size:12px;line-height:12px;color:#6d6d6d;letter-spacing:-0.005px;">Move Down Icon</span><span class="t" style="left:249.30px;top:601.84px;font-size:12px;line-height:12px;color:#6d6d6d;letter-spacing:-0.062px;">Move Up Icon</span><span class="t" style="left:249.30px;top:623.84px;font-size:12px;line-height:12px;color:#000;letter-spacing:-0.039px;">Duplicate Icon</span><span class="t" style="left:249.30px;top:645.84px;font-size:12px;line-height:12px;color:#000;letter-spacing:-0.026px;">Gif Optimize</span><span class="t" style="left:249.30px;top:667.84px;font-size:12px;line-height:12px;color:#000;letter-spacing:-0.491px;">Set General Rate...</span>
</body></html>
